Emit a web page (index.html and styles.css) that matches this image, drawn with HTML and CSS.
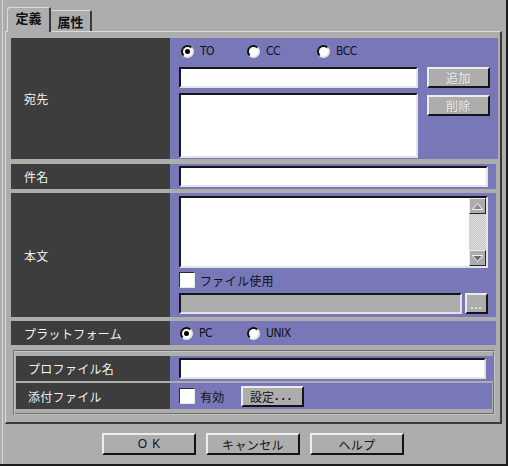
FILE: index.html
```html
<!DOCTYPE html>
<html lang="ja">
<head>
<meta charset="utf-8">
<title>定義</title>
<link rel="stylesheet" href="styles.css">
</head>
<body>
<div class="window">
  <div class="tabs">
    <div class="tab active">定義</div>
    <div class="tab">属性</div>
  </div>
  <div class="panel">
    <div class="row row-dest">
      <div class="label">宛先</div>
      <div class="field dest-grid">
        <div class="radios">
          <div class="opt w66"><span class="radio on"></span><span class="latin">TO</span></div>
          <div class="opt w70"><span class="radio"></span><span class="latin">CC</span></div>
          <div class="opt"><span class="radio"></span><span class="latin">BCC</span></div>
        </div>
        <div class="input dest-input"></div>
        <div class="btn small disabled">追加</div>
        <div class="input dest-area"></div>
        <div class="btn small disabled">削除</div>
      </div>
    </div>
    <div class="row row-subject">
      <div class="label">件名</div>
      <div class="field center">
        <div class="input full"></div>
      </div>
    </div>
    <div class="row row-body">
      <div class="label">本文</div>
      <div class="field body-stack">
        <div class="input textarea">
          <div class="text-content"></div>
          <div class="scrollbar">
            <div class="sb-btn"><svg width="11" height="7" viewBox="0 0 11 7"><polygon points="5.5,0.5 10.5,6.5 0.5,6.5" fill="#8c8c8c" stroke="#f0f0f0" stroke-width="1"/></svg></div>
            <div class="sb-track"></div>
            <div class="sb-btn"><svg width="11" height="7" viewBox="0 0 11 7"><polygon points="0.5,0.5 10.5,0.5 5.5,6.5" fill="#6c6c6c" stroke="#f0f0f0" stroke-width="1"/></svg></div>
          </div>
        </div>
        <div class="check-line"><span class="check"></span><span class="check-text">ファイル使用</span></div>
        <div class="file-line">
          <div class="input file-input"></div>
          <div class="btn dots">...</div>
        </div>
      </div>
    </div>
    <div class="row row-platform">
      <div class="label">プラットフォーム</div>
      <div class="field radios plat">
        <div class="opt w66"><span class="radio on"></span><span class="latin">PC</span></div>
        <div class="opt"><span class="radio"></span><span class="latin">UNIX</span></div>
      </div>
    </div>
    <div class="group">
      <div class="row row-profile">
        <div class="label glabel">プロファイル名</div>
        <div class="field center">
          <div class="input full profile"></div>
        </div>
      </div>
      <div class="row row-attach">
        <div class="label glabel">添付ファイル</div>
        <div class="field attach">
          <span class="check"></span><span class="check-text">有効</span>
          <div class="btn setting">設定<span class="dotted">...</span></div>
        </div>
      </div>
    </div>
  </div>
  <div class="actions">
    <div class="btn big ok">OK</div>
    <div class="btn big">キャンセル</div>
    <div class="btn big">ヘルプ</div>
  </div>
</div>
</body>
</html>
```
FILE: styles.css
```css
* { box-sizing: border-box; margin: 0; padding: 0; }
html, body { width: 508px; height: 466px; overflow: hidden; }
body {
  background: #adadad;
  font-family: "Noto Sans CJK JP", sans-serif;
  font-size: 12px;
  color: #1a1a1a;
}
.window {
  width: 508px;
  height: 466px;
  display: flex;
  flex-direction: column;
  padding-top: 7px;
  border-right: 2px solid #1c1c1c;
  border-bottom: 2px solid #1c1c1c;
  box-shadow: inset 2px 0 0 #adadad, inset 3px 0 0 #d6d6d6;
}
/* tabs */
.tabs {
  display: flex;
  align-items: flex-end;
  height: 25px;
  margin-left: 7px;
  margin-bottom: -1px;
  position: relative;
  z-index: 1;
}
.tab {
  display: flex;
  align-items: center;
  justify-content: center;
  font-size: 13px;
  font-weight: bold;
  color: #111;
  background: #adadad;
  border-top: 1px solid #dcdcdc;
  border-right: 2px solid #3a3a3a;
  border-top-right-radius: 2px;
}
.tab.active {
  width: 44px;
  height: 25px;
  border-left: 1px solid #dcdcdc;
  border-top-left-radius: 3px;
  padding-bottom: 5px;
}
.tab:not(.active) {
  width: 41px;
  height: 21px;
  margin-bottom: 1px;
  font-weight: 600;
  padding-top: 1px;
}
/* panel */
.panel {
  margin-left: 5px;
  width: 497px;
  border-top: 1px solid #dcdcdc;
  border-left: 1px solid #dcdcdc;
  border-right: 2px solid #3a3a3a;
  border-bottom: 2px solid #3a3a3a;
  padding: 6px 4px 7px 5px;
  display: flex;
  flex-direction: column;
}
.row { display: flex; }
.label {
  width: 159px;
  flex: none;
  background: #3d3d3d;
  color: #f2f2f2;
  padding-left: 13px;
  display: flex;
  align-items: center;
  letter-spacing: 0.3px;
}
.field {
  flex: 1;
  background: #7878b8;
  padding-left: 9px;
  padding-right: 8px;
}
.field.center { display: flex; align-items: center; }
.row-dest { height: 121px; margin-bottom: 5px; }
.row-subject { height: 25px; margin-bottom: 4px; }
.row-body { height: 124px; margin-bottom: 4px; }
.row-platform { height: 24px; margin-bottom: 5px; }
/* inputs */
.input {
  background: #fff;
  border: 2px solid;
  border-color: #161616 #e4e4e4 #e4e4e4 #161616;
}
.full { width: 100%; height: 21px; }
.profile { width: 307px; }
/* dest grid */
.dest-grid {
  display: grid;
  grid-template-columns: 239px 63px;
  grid-template-rows: 22px 21px 65px;
  column-gap: 9px;
  padding-top: 7px;
  align-content: start;
}
.dest-grid .radios { grid-column: 1 / 3; margin-bottom: 9px; height: 13px; }
.dest-input { height: 21px; }
.dest-area { height: 65px; margin-top: 5px; }
.dest-grid .btn.small:last-child { margin-top: 7px; height: 21px; align-self: start; }
/* radios */
.radios { display: flex; align-items: center; }
.opt { display: flex; align-items: center; gap: 6px; padding-left: 2px; }
.w66 { width: 66px; }
.w70 { width: 70px; }
.radio {
  width: 13px;
  height: 13px;
  border-radius: 50%;
  background: #fff;
  border: 2px solid;
  border-color: #111 #e8e8e8 #e8e8e8 #111;
  display: flex;
  align-items: center;
  justify-content: center;
  flex: none;
}
.radio.on::after {
  content: "";
  width: 5px;
  height: 5px;
  border-radius: 50%;
  background: #000;
}
.latin {
  font-family: "Liberation Sans Narrow", "DejaVu Sans Condensed", "Liberation Sans", sans-serif;
  font-stretch: condensed;
  font-weight: 500;
  font-size: 12px;
  letter-spacing: -0.5px;
  color: #111;
  line-height: 13px;
}
.plat { padding-left: 9px; }
.plat .opt { padding-left: 1px; }
.plat .opt:first-child { width: 67px; }
/* buttons */
.btn {
  background: #adadad;
  border: 2px solid;
  border-color: #ececec #141414 #141414 #ececec;
  display: flex;
  align-items: center;
  justify-content: center;
  color: #151515;
}
.btn.small { height: 21px; width: 63px; font-size: 12px; letter-spacing: 0.5px; }
.btn.disabled { color: #ececec; text-shadow: 1px 1px 0 #9a9a9a; }
/* body */
.body-stack {
  display: flex;
  flex-direction: column;
  padding-top: 3px;
}
.textarea {
  height: 72px;
  display: flex;
  width: 309px;
}
.text-content { flex: 1; }
.scrollbar {
  width: 17px;
  display: flex;
  flex-direction: column;
}
.sb-btn {
  height: 16px;
  background: #adadad;
  border: 1px solid;
  border-color: #ececec #262626 #262626 #ececec;
  display: flex;
  align-items: center;
  justify-content: center;
}
.sb-track {
  flex: 1;
  background: repeating-conic-gradient(#e0e0e0 0 25%, #c4c4c4 0 50%) 0 0 / 2px 2px;
}
.check-line {
  display: flex;
  align-items: center;
  margin-top: 4px;
  height: 16px;
}
.check {
  width: 16px;
  height: 16px;
  flex: none;
  background: #fff;
  border: 1px solid;
  border-color: #2a2a2a #e6e6e6 #e6e6e6 #2a2a2a;
}
.check-text { margin-left: 5px; color: #111; font-size: 12px; letter-spacing: 0.3px; }
.file-line { display: flex; margin-top: 5px; height: 21px; gap: 3px; }
.file-input { width: 283px; background: #adadad; }
.btn.dots {
  width: 23px;
  color: #f4f4f4;
  font-family: "Liberation Sans", sans-serif;
  font-weight: bold;
  font-size: 11px;
  letter-spacing: 1px;
  padding-top: 3px;
}
/* group */
.group {
  margin-left: 2px;
  margin-right: 1px;
  border: 2px groove #c4c4c4;
  padding: 4px 1px;
  display: flex;
  flex-direction: column;
  gap: 2px;
}
.glabel { width: 154px; padding-left: 12px; }
.row-profile { height: 25px; }
.row-attach { height: 26px; }
.attach { display: flex; align-items: center; }
.btn.setting {
  width: 63px;
  height: 21px;
  margin-left: 16px;
  font-size: 12px;
}
.dotted { letter-spacing: 3px; margin-left: 1px; font-family: "Liberation Sans", sans-serif; font-weight: bold; }
/* actions */
.actions {
  display: flex;
  justify-content: center;
  gap: 10px;
  margin-top: 9px;
}
.btn.big { width: 94px; height: 22px; font-size: 12px; letter-spacing: 0.4px; }
.btn.ok { letter-spacing: 5px; padding-left: 5px; font-family: "Liberation Sans", sans-serif; }
```
